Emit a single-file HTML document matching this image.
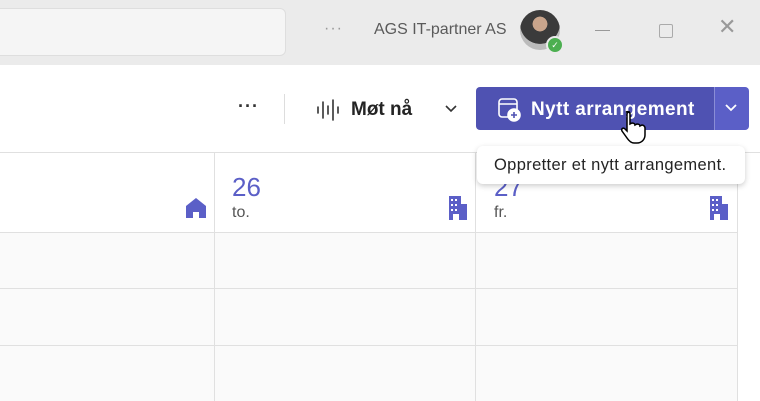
<!DOCTYPE html><html><head><style>
body{margin:0;width:760px;height:401px;overflow:hidden;position:relative;background:#fff;font-family:"Liberation Sans",sans-serif}
.a{position:absolute}
</style></head><body>
<div class="a" style="left:0;top:0;width:760px;height:65px;background:#ebebeb"></div>
<div class="a" style="left:-10px;top:8px;width:294px;height:46px;background:#f5f5f5;border:1px solid #dedede;border-radius:6px"></div>
<div class="a" style="left:324px;top:20px;color:#999;font-size:16px;letter-spacing:1px">···</div>
<div class="a" style="left:374px;top:21px;color:#5a5a5a;font-size:16px">AGS IT-partner AS</div>
<div class="a" style="left:520px;top:10px;width:40px;height:40px;border-radius:50%;background:radial-gradient(circle at 50% 35%,#c9a58c 0 22%,#3b3b3b 23% 60%,#bbb 61%)"></div>
<div class="a" style="left:546px;top:36px;width:14px;height:14px;border-radius:50%;background:#4caf50;border:2px solid #ebebeb;color:#fff;font-size:9px;text-align:center;line-height:14px">✓</div>
<div class="a" style="left:595px;top:30px;width:15px;height:1px;background:#999"></div>
<div class="a" style="left:659px;top:24px;width:12px;height:12px;border:1px solid #aaa;border-radius:2px"></div>
<div class="a" style="left:718px;top:14px;color:#999;font-size:22px">✕</div>
<div class="a" style="left:238px;top:96px;font-size:18px;font-weight:bold;color:#333;letter-spacing:1px">···</div>
<div class="a" style="left:284px;top:94px;width:1px;height:30px;background:#ddd"></div>
<svg class="a" style="left:316px;top:98px" width="24" height="24" stroke="#333" stroke-width="1.6" stroke-linecap="round"><path d="M2 9v6M7 4v16M12 8v8M17 2v20M22 9v6"/></svg>
<div class="a" style="left:351px;top:99px;font-size:19px;font-weight:bold;color:#242424">Møt nå</div>
<svg class="a" style="left:444px;top:104px" width="14" height="10" fill="none" stroke="#333" stroke-width="1.6"><path d="M2 2l5 5 5-5"/></svg>
<div class="a" style="left:476px;top:87px;width:272px;height:43px;background:#4f52b2;border-radius:4px"></div>
<div class="a" style="left:714px;top:87px;width:34px;height:43px;background:#5b5fc7;border-radius:0 4px 4px 0;border-left:1px solid #8a8dd6"></div>
<svg class="a" style="left:724px;top:103px" width="14" height="10" fill="none" stroke="#fff" stroke-width="1.8"><path d="M2 2l5 5 5-5"/></svg>
<svg class="a" style="left:497px;top:97px" width="26" height="26" fill="none" stroke="#fff" stroke-width="1.6"><rect x="2" y="2" width="18" height="18" rx="3"/><path d="M2 7h18"/><circle cx="17" cy="18" r="6" fill="#fff"/><path d="M17 15v6M14 18h6" stroke="#4f52b2"/></svg>
<div class="a" style="left:531px;top:99px;font-size:19px;font-weight:bold;color:#fff;letter-spacing:0.4px">Nytt arrangement</div>
<svg class="a" style="left:618px;top:110px" width="28" height="34"><path d="M8 2c2-1 4 0 4 2v10l2-1c2 0 3 1 3 2l2-1c2 0 3 1 3 2l2-1c2 0 3 2 3 3v7c0 4-3 8-8 8h-3c-3 0-5-2-7-5l-5-7c-1-2 1-4 3-2l2 2V4c0-1 1-2 3-2z" fill="#fff" stroke="#000" stroke-width="1.5"/></svg>
<div class="a" style="left:0;top:152px;width:760px;height:1px;background:#e0e0e0"></div>
<div class="a" style="left:0;top:232px;width:737px;height:169px;background:#fafafa"></div>
<div class="a" style="left:214px;top:153px;width:1px;height:248px;background:#e0e0e0"></div>
<div class="a" style="left:475px;top:153px;width:1px;height:248px;background:#e0e0e0"></div>
<div class="a" style="left:737px;top:153px;width:1px;height:248px;background:#e0e0e0"></div>
<div class="a" style="left:0;top:232px;width:738px;height:1px;background:#e0e0e0"></div>
<div class="a" style="left:0;top:288px;width:738px;height:1px;background:#e0e0e0"></div>
<div class="a" style="left:0;top:345px;width:738px;height:1px;background:#e0e0e0"></div>
<div class="a" style="left:232px;top:172px;font-size:26px;color:#5b5fc7">26</div>
<div class="a" style="left:232px;top:204px;font-size:16px;color:#555">to.</div>
<div class="a" style="left:494px;top:172px;font-size:26px;color:#5b5fc7">27</div>
<div class="a" style="left:494px;top:204px;font-size:16px;color:#555">fr.</div>
<svg class="a" style="left:185px;top:197px" width="22" height="22" fill="#5b5fc7"><path d="M11 1L1 9v12h7v-6h6v6h7V9z"/></svg>
<svg class="a" style="left:448px;top:196px" width="20" height="24"><rect x="1" y="0" width="12" height="24" fill="#5b5fc7"/><rect x="13" y="8" width="6" height="16" fill="#5b5fc7"/><g fill="#fff"><rect x="3" y="3" width="2" height="2"/><rect x="7" y="3" width="2" height="2"/><rect x="3" y="8" width="2" height="2"/><rect x="7" y="8" width="2" height="2"/><rect x="3" y="13" width="2" height="2"/><rect x="7" y="13" width="2" height="2"/><rect x="5" y="18" width="6" height="6"/></g></svg>
<svg class="a" style="left:709px;top:196px" width="20" height="24"><rect x="1" y="0" width="12" height="24" fill="#5b5fc7"/><rect x="13" y="8" width="6" height="16" fill="#5b5fc7"/><g fill="#fff"><rect x="3" y="3" width="2" height="2"/><rect x="7" y="3" width="2" height="2"/><rect x="3" y="8" width="2" height="2"/><rect x="7" y="8" width="2" height="2"/><rect x="3" y="13" width="2" height="2"/><rect x="7" y="13" width="2" height="2"/><rect x="5" y="18" width="6" height="6"/></g></svg>
<div class="a" style="left:477px;top:146px;width:268px;height:38px;background:#fff;border-radius:6px;box-shadow:0 2px 6px rgba(0,0,0,.2)"></div>
<div class="a" style="left:494px;top:156px;font-size:16.5px;color:#242424;letter-spacing:0.35px">Oppretter et nytt arrangement.</div>
</body></html>
